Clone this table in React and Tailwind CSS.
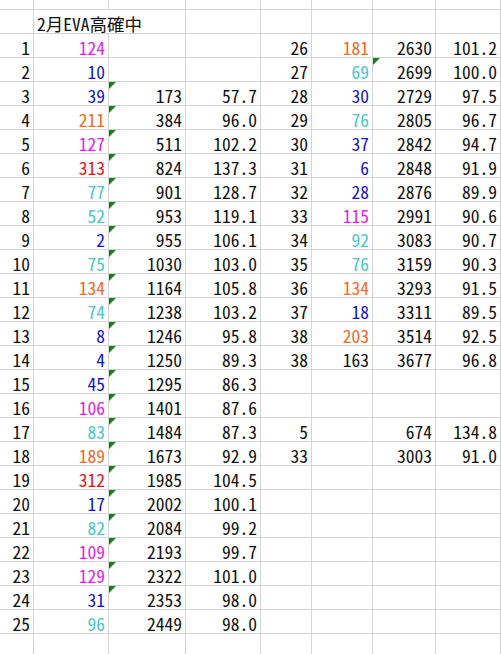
import React from "react";

const C = {
  m: "text-[#e41ee4]",
  b: "text-[#1616c4]",
  o: "text-[#ee6a26]",
  r: "text-[#e4141c]",
  c: "text-[#4cc4cc]",
  k: "text-[#111111]",
};

// [n, value, color, total, ratio]
const left = [
  [1, 124, "m"],
  [2, 10, "b"],
  [3, 39, "b", 173, "57.7"],
  [4, 211, "o", 384, "96.0"],
  [5, 127, "m", 511, "102.2"],
  [6, 313, "r", 824, "137.3"],
  [7, 77, "c", 901, "128.7"],
  [8, 52, "c", 953, "119.1"],
  [9, 2, "b", 955, "106.1"],
  [10, 75, "c", 1030, "103.0"],
  [11, 134, "o", 1164, "105.8"],
  [12, 74, "c", 1238, "103.2"],
  [13, 8, "b", 1246, "95.8"],
  [14, 4, "b", 1250, "89.3"],
  [15, 45, "b", 1295, "86.3"],
  [16, 106, "m", 1401, "87.6"],
  [17, 83, "c", 1484, "87.3"],
  [18, 189, "o", 1673, "92.9"],
  [19, 312, "r", 1985, "104.5"],
  [20, 17, "b", 2002, "100.1"],
  [21, 82, "c", 2084, "99.2"],
  [22, 109, "m", 2193, "99.7"],
  [23, 129, "m", 2322, "101.0"],
  [24, 31, "b", 2353, "98.0"],
  [25, 96, "c", 2449, "98.0"],
];

const right = [
  [26, 181, "o", 2630, "101.2"],
  [27, 69, "c", 2699, "100.0"],
  [28, 30, "b", 2729, "97.5"],
  [29, 76, "c", 2805, "96.7"],
  [30, 37, "b", 2842, "94.7"],
  [31, 6, "b", 2848, "91.9"],
  [32, 28, "b", 2876, "89.9"],
  [33, 115, "m", 2991, "90.6"],
  [34, 92, "c", 3083, "90.7"],
  [35, 76, "c", 3159, "90.3"],
  [36, 134, "o", 3293, "91.5"],
  [37, 18, "b", 3311, "89.5"],
  [38, 203, "o", 3514, "92.5"],
  [38, 163, "k", 3677, "96.8"],
  [],
  [],
  [5, "", "k", 674, "134.8"],
  [33, "", "k", 3003, "91.0"],
];

const Flag = () => (
  <svg className="absolute left-0 top-0" width="8" height="8" viewBox="0 0 8 8">
    <polygon points="0,0 7,0 0,7" fill="#1c7c1c" />
  </svg>
);

const Cell = ({ children, color = "k", flag, last, noRight, left: alignLeft }) => (
  <div
    className={`relative whitespace-nowrap pt-[4px] leading-[19px] border-[#d4d4d4] ${
      last ? "" : "border-b"
    } ${noRight ? "" : "border-r"} ${alignLeft ? "pl-[3px] text-left" : "pr-[3px] text-right"} ${C[color]}`}
  >
    {flag && <Flag />}
    {children}
  </div>
);

export default function App() {
  const rows = [];
  for (let i = 0; i < 25; i++) {
    const l = left[i];
    const r = right[i] || [];
    rows.push(
      <React.Fragment key={i}>
        <Cell>{l[0]}</Cell>
        <Cell color={l[2]}>{l[1]}</Cell>
        <Cell flag={i >= 2 && i <= 23}>{l[3]}</Cell>
        <Cell>{l[4]}</Cell>
        <Cell>{r[0]}</Cell>
        <Cell color={r[2]}>{r[1]}</Cell>
        <Cell flag={i === 1}>{r[3]}</Cell>
        <Cell>{r[4]}</Cell>
      </React.Fragment>
    );
  }

  return (
    <div className="w-[501px] h-[654px] overflow-hidden bg-white font-['Noto_Sans_CJK_JP',sans-serif] text-[17.5px] [font-feature-settings:'hwid'] text-[#111111]">
      <div className="grid grid-cols-[34px_75px_77px_75px_51px_61px_63px_65px] grid-rows-[10px_repeat(26,24px)_20px]">
        {Array.from({ length: 8 }).map((_, i) => (
          <div key={"t" + i} className="border-r border-b border-[#d4d4d4]" />
        ))}
        <Cell />
        <Cell left noRight>
          2月EVA高確中
        </Cell>
        <Cell />
        <Cell />
        <Cell />
        <Cell />
        <Cell />
        <Cell />
        {rows}
        {Array.from({ length: 8 }).map((_, i) => (
          <Cell key={"b" + i} last />
        ))}
      </div>
    </div>
  );
}
